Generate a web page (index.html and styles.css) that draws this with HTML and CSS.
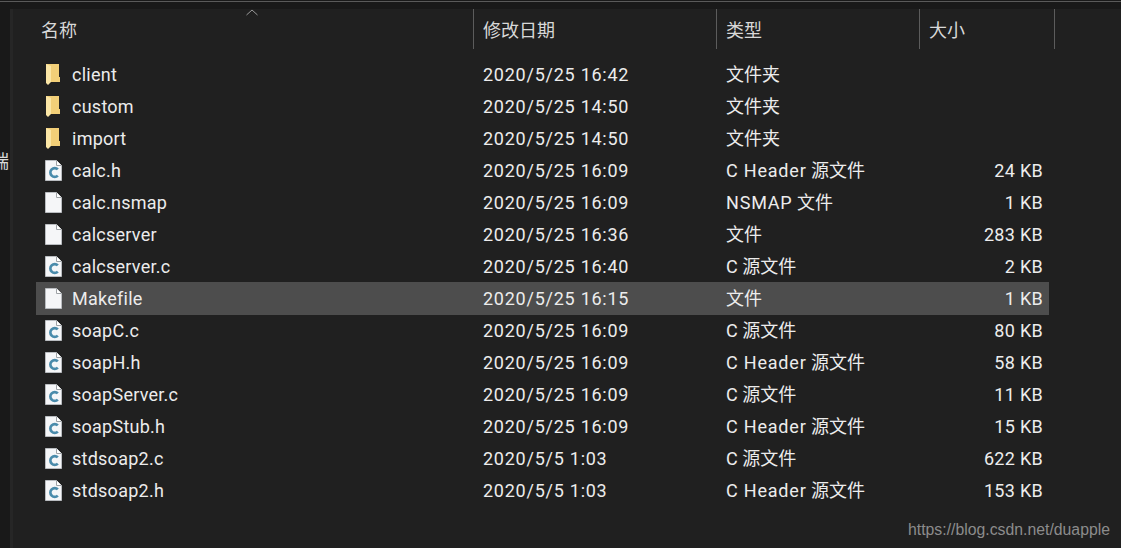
FILE: index.html
```html
<!DOCTYPE html>
<html lang="zh-CN">
<head>
  <meta charset="UTF-8">
  <title>文件列表</title>
  <link rel="stylesheet" href="styles.css">
</head>
<body>

<!-- 顶部窄条 -->
<div class="top-strip"></div>

<div class="main">
  <div class="side"><span class="side-text">端</span></div>
  <div class="side-edge"></div>

  <div class="content">
    <!-- 表头 -->
    <div class="header">
      <svg class="sort-caret" width="12" height="7" viewBox="0 0 12 7"><path d="M.5 6 6 1l5.500 5" fill="none" stroke="#9a9a9a" stroke-width="1"/></svg>
      <div class="col col-name">名称</div>
      <div class="col col-date">修改日期</div>
      <div class="col col-type">类型</div>
      <div class="col col-size">大小</div>
    </div>

    <!-- 图标 -->
    <svg width="0" height="0" class="defs">
      <symbol id="folder" viewBox="0 0 17 21">
        <path d="M1 0h13v13h1v5H5v-3H1z" fill="#f2cf78"/>
        <path d="M1 0l5 2v16l-3 3-1-1-1-1z" fill="#fbe6a6"/>
      </symbol>
      <symbol id="file" viewBox="0 0 17 21">
        <path d="M.5.5h11l5 5v15H.5z" fill="#f5f6f8" stroke="#b9bcc0"/>
        <path d="M11.500.5v5h5" fill="#fff" stroke="#9ea2a6"/>
      </symbol>
      <symbol id="cfile" viewBox="0 0 17 21">
        <path d="M.5.5h11l5 5v15H.5z" fill="#f5f6f8" stroke="#b9bcc0"/>
        <path d="M11.500.5v5h5" fill="#fff" stroke="#9ea2a6"/>
        <path d="M12.800 9.400A4.300 4.400 0 1 0 12.800 15.600" fill="none" stroke="#4a8bab" stroke-width="2.800"/>
      </symbol>
    </svg>

    <div class="rows">
      <div class="row"><div class="name"><svg class="icon"><use href="#folder"/></svg>client</div><div class="date">2020/5/25 16:42</div><div>文件夹</div><div class="size"></div></div>
      <div class="row"><div class="name"><svg class="icon"><use href="#folder"/></svg>custom</div><div class="date">2020/5/25 14:50</div><div>文件夹</div><div class="size"></div></div>
      <div class="row"><div class="name"><svg class="icon"><use href="#folder"/></svg>import</div><div class="date">2020/5/25 14:50</div><div>文件夹</div><div class="size"></div></div>
      <div class="row"><div class="name"><svg class="icon"><use href="#cfile"/></svg>calc.h</div><div class="date">2020/5/25 16:09</div><div><span class="en">C Header</span> 源文件</div><div class="size">24 KB</div></div>
      <div class="row"><div class="name"><svg class="icon"><use href="#file"/></svg>calc.nsmap</div><div class="date">2020/5/25 16:09</div><div><span class="en">NSMAP</span> 文件</div><div class="size">1 KB</div></div>
      <div class="row"><div class="name"><svg class="icon"><use href="#file"/></svg>calcserver</div><div class="date">2020/5/25 16:36</div><div>文件</div><div class="size">283 KB</div></div>
      <div class="row"><div class="name"><svg class="icon"><use href="#cfile"/></svg>calcserver.c</div><div class="date">2020/5/25 16:40</div><div>C 源文件</div><div class="size">2 KB</div></div>
      <div class="row selected"><div class="name"><svg class="icon"><use href="#file"/></svg>Makefile</div><div class="date">2020/5/25 16:15</div><div>文件</div><div class="size">1 KB</div></div>
      <div class="row"><div class="name"><svg class="icon"><use href="#cfile"/></svg>soapC.c</div><div class="date">2020/5/25 16:09</div><div>C 源文件</div><div class="size">80 KB</div></div>
      <div class="row"><div class="name"><svg class="icon"><use href="#cfile"/></svg>soapH.h</div><div class="date">2020/5/25 16:09</div><div><span class="en">C Header</span> 源文件</div><div class="size">58 KB</div></div>
      <div class="row"><div class="name"><svg class="icon"><use href="#cfile"/></svg>soapServer.c</div><div class="date">2020/5/25 16:09</div><div>C 源文件</div><div class="size">11 KB</div></div>
      <div class="row"><div class="name"><svg class="icon"><use href="#cfile"/></svg>soapStub.h</div><div class="date">2020/5/25 16:09</div><div><span class="en">C Header</span> 源文件</div><div class="size">15 KB</div></div>
      <div class="row"><div class="name"><svg class="icon"><use href="#cfile"/></svg>stdsoap2.c</div><div class="date">2020/5/5 1:03</div><div>C 源文件</div><div class="size">622 KB</div></div>
      <div class="row"><div class="name"><svg class="icon"><use href="#cfile"/></svg>stdsoap2.h</div><div class="date">2020/5/5 1:03</div><div><span class="en">C Header</span> 源文件</div><div class="size">153 KB</div></div>
    </div>

    <div class="watermark">https://blog.csdn.net/duapple</div>
  </div>
</div>

</body>
</html>
```

FILE: styles.css
```css
html, body {
  height: 100%;
}
body {
  margin: 0;
  background: #202020;
  color: #ececec;
  font-family: Roboto, "Noto Sans CJK SC", sans-serif;
  font-size: 18px;
  overflow: hidden;
  display: flex;
  flex-direction: column;
}
.top-strip {
  height: 9px;
  box-sizing: border-box;
  background: #191919;
  border-top: 1px solid #191919;
  box-shadow: inset 0 1px 0 #5a5a5a;
}
.main {
  flex: 1;
  display: flex;
  min-height: 0;
}
.side {
  width: 10px;
  background: #191919;
  overflow: hidden;
  padding-top: 138px;
  box-sizing: border-box;
  color: #d8d8d8;
}
.side-text {
  display: block;
  margin-left: -9px;
}
.side-edge {
  width: 3px;
  background: #262626;
}
.content {
  flex: 1;
  position: relative;
  padding-left: 23px;
}
.defs {
  position: absolute;
}
.header {
  display: flex;
  height: 40px;
  color: #d8d8d8;
}
.col {
  box-sizing: border-box;
  padding-top: 7px;
  border-right: 1px solid #5c5c5c;
}
.col-name {
  width: 438px;
  padding-left: 5px;
}
.col-date {
  width: 243px;
  padding-left: 9px;
}
.col-type {
  width: 203px;
  padding-left: 9px;
}
.col-size {
  width: 135px;
  padding-left: 9px;
}
.sort-caret {
  position: absolute;
  left: 233px;
  top: 0;
}
.rows {
  padding-top: 9px;
}
.row {
  display: grid;
  grid-template-columns: 447px 243px 203px 114px;
  width: 1013px;
  height: 32px;
  line-height: 34px;
  white-space: nowrap;
}
.row.selected {
  background: #4d4d4d;
  box-shadow: 0 1px 0 #4d4d4d;
}
.name {
  display: flex;
  padding-left: 9px;
  letter-spacing: .25px;
}
.date {
  letter-spacing: .75px;
}
.en {
  letter-spacing: .8px;
}
.icon {
  width: 17px;
  height: 21px;
  margin: 6px 10px 0 0;
  flex: none;
}
.size {
  text-align: right;
  letter-spacing: .3px;
}
.watermark {
  position: absolute;
  right: 11px;
  bottom: 9px;
  font-family: "Liberation Sans", sans-serif;
  font-size: 15.800px;
  color: #8c8c8c;
}
```
